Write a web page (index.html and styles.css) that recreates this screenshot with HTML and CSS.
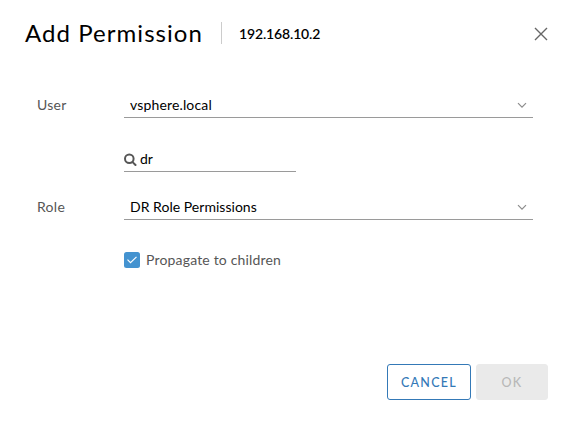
FILE: index.html
```html
<!DOCTYPE html>
<html lang="en">
<head>
<meta charset="utf-8">
<title>Add Permission</title>
<link rel="stylesheet" href="styles.css">
</head>
<body>
<main class="dialog">
  <header class="header">
    <h1 class="title">Add Permission</h1>
    <span class="host">192.168.10.2</span>
    <svg class="close" width="14" height="14" viewBox="0 0 14 14"><path d="M1 1 13 13M13 1 1 13"/></svg>
  </header>
  <form class="form">
    <span class="label">User</span>
    <div class="field user"><span class="user-text">vsphere.local</span><svg class="caret" width="10" height="7" viewBox="0 0 10 7"><path d="M1 1.2 5 5.2 9 1.2"/></svg></div>
    <div class="field search"><svg class="lens" width="13" height="13" viewBox="0 0 13 13"><circle cx="5.3" cy="5.8" r="4.3"/><path d="M8.6 9.1 11.5 12"/></svg><span class="search-text">dr</span></div>
    <span class="label role-label">Role</span>
    <div class="field role"><span class="role-text">DR Role Permissions</span><svg class="caret" width="10" height="7" viewBox="0 0 10 7"><path d="M1 1.2 5 5.2 9 1.2"/></svg></div>
    <div class="check"><svg class="box" width="16" height="16" viewBox="0 0 16 16"><rect width="16" height="16" rx="2.5"/><path d="M3.5 7.7 6.5 10.7 12.5 4.9"/></svg><span class="check-text">Propagate to children</span></div>
  </form>
  <footer class="footer">
    <button class="button cancel">CANCEL</button>
    <button class="button ok" disabled>OK</button>
  </footer>
</main>
</body>
</html>
```
FILE: styles.css
```css
* { box-sizing: border-box; }
body {
  margin: 0;
  background: #fff;
  color: #000;
  font: 14px/20px Metropolis, Lato, "Open Sans", sans-serif;
}
.dialog {
  display: flex;
  flex-direction: column;
  width: 570px;
  height: 422px;
  padding: 18px 22px 22px 25px;
}
.header { display: flex; align-items: center; height: 32px; }
.title {
  width: 196px;
  margin: 0;
  padding-bottom: 2px;
  font-size: 24px;
  line-height: 30px;
  font-weight: 400;
  letter-spacing: 1.05px;
  white-space: nowrap;
}
.host {
  height: 22px;
  margin-top: -2px;
  padding-left: 17px;
  border-left: 1px solid #ccc;
  line-height: 24px;
  font-weight: 600;
  letter-spacing: -0.15px;
}
.close { margin-left: auto; fill: none; stroke: #666; stroke-width: 1.4; }
.form {
  display: grid;
  grid-template-columns: 87px 409px;
  grid-template-rows: 24px 54px 48px 49px;
  margin: 44px 0 0 12px;
}
.label { color: #565656; line-height: 22px; letter-spacing: 0.3px; }
.field {
  display: flex;
  align-items: center;
  height: 24px;
  padding: 0 6px;
  border-bottom: 1px solid #9a9a9a;
}
.user-text, .role-text { margin-top: -1px; letter-spacing: 0.15px; }
.role-text { letter-spacing: 0.03px; }
.caret { margin-left: auto; fill: none; stroke: #8c8c8c; stroke-width: 1.2; }
.search { grid-column: 2; align-self: end; width: 172px; padding: 0; gap: 3px; }
.search-text { margin-top: -2px; }
.lens { fill: none; stroke: #565656; stroke-width: 2; stroke-linecap: round; }
.role-label, .role { align-self: end; }
.role-label { height: 24px; }
.check { grid-column: 2; display: flex; align-items: flex-end; gap: 6px; height: 48px; color: #565656; }
.box { fill: none; stroke: #fff; stroke-width: 1.2; }
.box rect { fill: #4493d0; stroke: none; }
.check-text { line-height: 16px; letter-spacing: 0.17px; white-space: nowrap; }
.footer { display: flex; justify-content: flex-end; gap: 5px; margin-top: auto; }
.button {
  height: 36px;
  padding: 2px 0 0;
  border: 1px solid #3479b7;
  border-radius: 3px;
  background: #fff;
  color: #3479b7;
  font: 500 12.5px/32px Metropolis, Lato, sans-serif;
  letter-spacing: 1.3px;
}
.cancel { width: 84px; }
.ok { width: 72px; border-color: #eaeaea; background: #eaeaea; color: #b8b8b8; }
```
